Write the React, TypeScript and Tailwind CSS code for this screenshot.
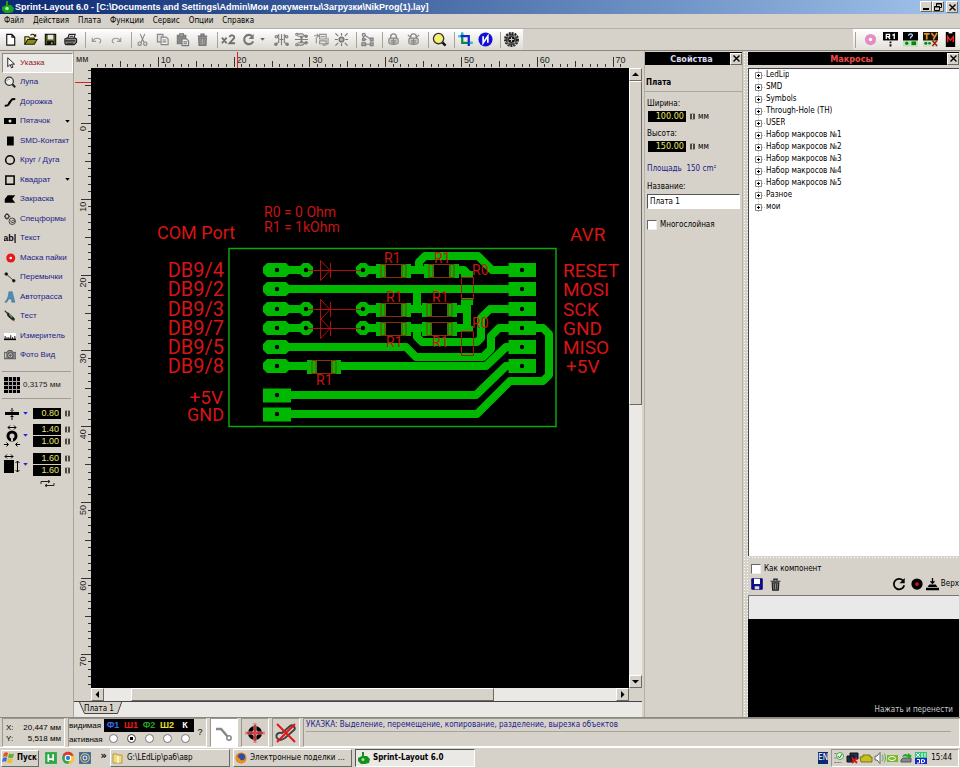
import { useState, type ReactNode } from 'react'

const RAISED = 'border border-t-white border-l-white border-r-[#6b6963] border-b-[#6b6963] bg-[#d6d2ca]'
const SUNKEN = 'border border-t-[#9a968e] border-l-[#9a968e] border-r-white border-b-white'
const TRACK = 'bg-[#ebe9e5]'

const MENU = ['Файл', 'Действия', 'Плата', 'Функции', 'Сервис', 'Опции', 'Справка']

const MACROS = [
  'LedLip',
  'SMD',
  'Symbols',
  'Through-Hole (TH)',
  'USER',
  'Набор макросов №1',
  'Набор макросов №2',
  'Набор макросов №3',
  'Набор макросов №4',
  'Набор макросов №5',
  'Разное',
  'мои',
]

const LAYERS = [
  { id: 'Ф1', color: 'text-[#3a6cf0]' },
  { id: 'Ш1', color: 'text-[#f01818]' },
  { id: 'Ф2', color: 'text-[#28a028]' },
  { id: 'Ш2', color: 'text-[#e8e030]' },
  { id: 'К', color: 'text-white' },
]

function Icon({ children, size = 16 }: { children: ReactNode; size?: number }) {
  return (
    <svg width={size} height={size} viewBox="0 0 16 16" fill="none" stroke="currentColor" strokeWidth="1.2" className="shrink-0" aria-hidden="true">
      {children}
    </svg>
  )
}

interface Item { label: string; icon: ReactNode; arrow?: boolean }

const lock = (
  <>
    <path d="M5 7V5a3 3 0 0 1 6 0v2" strokeWidth="1.5" />
    <path d="M3 8c0-1 1-1.500 2-1.500h6c1 0 2 .5 2 1.500v3c0 3-10 3-10 0z" fill="#ccc" />
    <path d="M5 9.500h6M5 11.500h6M8 7v6" />
  </>
)

const FILE_TOOLS: (Item | null)[] = [
  { label: 'Новый', icon: <path d="M4 2.500h5.500l3 3v8.500H4zM9.500 2.500v3h3" fill="#fff" stroke="#111" /> },
  {
    label: 'Открыть',
    icon: <g stroke="#222200"><path d="M2 13V5h4l1 1.500h5V8" fill="#e8e070" /><path d="M2 13l3-5h10l-3 5z" fill="#8a8a20" /><path d="M8 3.500c2-2 4-1 5 1M13.500 2.500v2h-2" /></g>,
  },
  {
    label: 'Сохранить',
    icon: <g stroke="#111"><path d="M2.500 2.500h11v11h-11z" fill="#55551a" /><path d="M5 3h6v5H5z" fill="#e8e8e0" stroke="none" /><path d="M5 10.500h6V13H5z" fill="#111" /><path d="M9 11h1v2H9z" fill="#fff" stroke="none" /></g>,
  },
  {
    label: 'Печать',
    icon: <g stroke="#222"><path d="M5 7l1.500-4.500H13L11.500 7" fill="#fff" /><path d="M2 7.500l2-1h9l1.500 1V11L12 13.500H3L2 12z" fill="#888" /><path d="M2 9.500h11M7 4.500h4M4 12h7" /></g>,
  },
  null,
  { label: 'Отменить', icon: <path d="M3.500 6v4h4M4 9.500C6 5.500 12 6 12.500 9c.3 2-1 2.500-2 2.500" stroke="#999" /> },
  { label: 'Повторить', icon: <path d="M12.500 6v4h-4M12 9.500C10 5.500 4 6 3.500 9c-.3 2 1 2.500 2 2.500" stroke="#999" /> },
  null,
  { label: 'Вырезать', icon: <g stroke="#888"><path d="M5.500 2L9.500 11M10.500 2L6.500 11" /><circle cx="5" cy="12.500" r="1.800" /><circle cx="11" cy="12.500" r="1.800" /></g> },
  { label: 'Копировать', icon: <g stroke="#888"><path d="M2.500 2.500h6v8h-6z" fill="#ddd" /><path d="M6.500 5.500H12l2 2v6H6.500zM8 8.500h4M8 10.500h4" fill="#eee" /></g> },
  { label: 'Вставить', icon: <g stroke="#777"><path d="M2.500 3.500h9v9h-9z" fill="#888" /><path d="M5 2h4v2.500H5z" fill="#bbb" /><path d="M7.500 7.500h5l2 2v5h-7zM9 10.500h4M9 12.500h4" fill="#eee" /></g> },
  { label: 'Удалить', icon: <g stroke="#777"><path d="M3 4.500h10M6.500 4V2.500h3V4M4 6.500h8l-.500 7.500h-7z" fill="#aaa" strokeWidth="1.600" /><path d="M6.500 7v6M9.500 7v6" /></g> },
  null,
  { label: 'Дублировать', icon: <path d="M1 6l5 6M6 6l-5 6M9 5.500C10 2.500 15 3 14 6.500L9 12h6" stroke="#707070" strokeWidth="2" /> },
  { label: 'Повернуть', arrow: true, icon: <><path d="M12 4.500A5 5 0 1 0 13 10" stroke="#777" strokeWidth="2.300" /><path d="M13.500 2v5.500H8z" fill="#777" stroke="none" /></> },
  {
    label: 'Отразить по горизонтали',
    icon: <g stroke="#808080"><path d="M8 2v12M3 5l2-2v8l-3 2M13 5l-2-2v8l3 2M6 8h4" /><circle cx="2.500" cy="5" r="1.300" /><circle cx="13.500" cy="5" r="1.300" /><circle cx="2" cy="13" r="1.300" fill="#808080" /><circle cx="14" cy="13" r="1.300" fill="#808080" /></g>,
  },
  {
    label: 'Отразить по вертикали',
    icon: <g stroke="#808080"><path d="M1 8h14M3 2h6l3 2.500H4M3 14h6l3-2.500H4M8 5v6M6.500 6.500L8 5l1.500 1.500M6.500 9.500L8 11l1.500-1.500" /><circle cx="3" cy="2.500" r="1.200" /><circle cx="3" cy="13.500" r="1.200" /><circle cx="13" cy="4.500" r="1.200" fill="#808080" /><circle cx="13" cy="11.500" r="1.200" fill="#808080" /></g>,
  },
  {
    label: 'Выровнять',
    icon: <g stroke="#909090"><path d="M0 4h5M3 2l2 2-2 2M2.500 6v6M6 2.500h7v5H6zM6 9.500h7v3H6zM9 14h4M15 6v7M13.500 12l1.500 1.500" /><path d="M7 5h5" /></g>,
  },
  { label: 'К сетке', icon: <g stroke="#777"><circle cx="8" cy="8" r="2.500" fill="#bbb" strokeWidth="1.600" /><path d="M1.500 1.500l3 3M14.500 1.500l-3 3M1.500 14.500l3-3M14.500 14.500l-3-3M8 1v3M8 12v3M1 8h3M12 8h3" /></g> },
  null,
  { label: 'Соединения', icon: <g stroke="#808080"><path d="M4 3l8 5M3.500 3v4M4 8h3M4 13h8" /><circle cx="4" cy="3" r="1.600" fill="#ddd" /><circle cx="4" cy="8" r="1.600" fill="#999" /><path d="M2 11.500h4v3H2zM11 6.500h3v3h-3zM11 11.500h3v3h-3z" fill="#aaa" /></g> },
  null,
  { label: 'Закрепить', icon: <g stroke="#888">{lock}</g> },
  { label: 'Открепить', icon: <g stroke="#888">{lock}<path d="M2 3l3 3M14 3l-3 3" /></g> },
  null,
  { label: 'Масштаб', icon: <><path d="M10.500 10.500l4 4" stroke="#111" strokeWidth="2.600" /><circle cx="7" cy="7" r="5.500" fill="#f6f070" stroke="#333" strokeWidth="1.400" /></> },
  null,
  { label: 'Фотошаблон', icon: <><path d="M4.500 1v10.500H15" stroke="#0a8a4a" strokeWidth="2.400" /><path d="M2 4.500h9.500V15" stroke="#1828d0" strokeWidth="2.400" /><path d="M0 3.500h3v2H0zM3.500 0h2v3h-2zM12.500 10.500H16v2h-3.500z" fill="#30c8e8" stroke="none" /></> },
  { label: 'Информация', icon: <><circle cx="8" cy="8" r="7.500" fill="#1010d8" stroke="none" /><path d="M5.500 4.500v7l5-7v7" stroke="#fff" strokeWidth="1.800" /></> },
  null,
  { label: 'Сетка', icon: <><circle cx="8" cy="8" r="6.500" fill="#555" stroke="#222" strokeWidth="3" strokeDasharray="2 1" /><path d="M2 5h12M2 11h12M5 2v12M11 2v12" stroke="#bbb" strokeWidth=".6" /><circle cx="8" cy="8" r="3.500" fill="#111" stroke="none" /><path d="M8 5.500v5M5.500 8h5" stroke="#ccc" /></> },
]

const PANEL_TOOLS: Item[] = [
  { label: 'Пайка', icon: <><circle cx="8" cy="8" r="6" fill="#e48cc4" stroke="none" /><circle cx="8" cy="8" r="1.800" fill="#fff" stroke="none" /></> },
  { label: 'Компоненты', icon: <><path d="M0 0h16v9H0z" fill="#000" stroke="none" /><path d="M3.500 7.500v-5H7v2.500H3.500M5.500 5l2 2.500M10 3.500l2-1v5" stroke="#fff" strokeWidth="1.400" /><path d="M8 10v2M8 13v2.500" stroke="#111" strokeWidth="2" /></> },
  { label: 'Помощь', icon: <><path d="M0 0h16v15H0z" fill="#000" stroke="none" /><path d="M6 4c0-3 4.500-2.500 4 0L8 6v1" stroke="#b8d8ff" strokeWidth="1.400" /><path d="M0 9h16v6H0z" fill="#b8e8b8" stroke="none" /><circle cx="4" cy="12" r="1.800" fill="#108010" stroke="none" /><path d="M9 10h5v4H9z" fill="#108010" stroke="none" /></> },
  { label: 'Технические условия', icon: <><path d="M0 0h16v15H0z" fill="#111" stroke="none" /><path d="M1 2h6M4 2v6M9 1l2.500 3.500M15 1l-4 7" stroke="#e89018" strokeWidth="1.800" /><path d="M0 9h16v6H0z" fill="#c8e8c0" stroke="none" /><circle cx="3" cy="12" r="1.600" fill="#207020" stroke="none" /><circle cx="7" cy="12" r="1.400" fill="#207020" stroke="none" /><path d="M10 9l5 6M15 9l-5 6" stroke="#b01818" strokeWidth="1.600" /></> },
  { label: 'Макросы', icon: <><path d="M3 0h10v16H3z" fill="#000" stroke="none" /><path d="M5 11V5l3 4 3-4v6" stroke="#f02020" strokeWidth="1.500" /><path d="M6 0h4v1.500H6z" fill="#fff" stroke="none" /></> },
]

const TOOLS: Item[] = [
  { label: 'Указка', icon: <path d="M5 1v12l3-3 2 4.500 2-1L10 9.500h4z" fill="#fff" stroke="#111" /> },
  { label: 'Лупа', icon: <><circle cx="7" cy="7" r="5.500" fill="#eee" stroke="#333" strokeWidth="1.600" /><path d="M11 11l4 4" stroke="#222" strokeWidth="2.600" /><path d="M4 7c0-2 2-3.500 4-2.500" stroke="#888" /></> },
  { label: 'Дорожка', icon: <path d="M1 13c6 0 4-1 7-5s2-4 7-4" stroke="#000" strokeWidth="2.800" /> },
  { label: 'Пятачок', arrow: true, icon: <><path d="M0 4h16v8H0z" fill="#000" stroke="none" /><circle cx="8" cy="8" r="2" fill="#e8e8e8" stroke="none" /></> },
  { label: 'SMD-Контакт', icon: <path d="M4 2h9v12H4z" fill="#000" stroke="none" /> },
  { label: 'Круг / Дуга', icon: <circle cx="8" cy="8" r="5.800" stroke="#000" strokeWidth="2" /> },
  { label: 'Квадрат', arrow: true, icon: <path d="M2.500 2.500h11v11h-11z" stroke="#000" strokeWidth="2" /> },
  { label: 'Закраска', icon: <path d="M1 13V8l4-5h10l-4 5 4 5z" fill="#000" stroke="none" /> },
  { label: 'Спецформы', icon: <g stroke="#333"><circle cx="4" cy="4.500" r="2.600" strokeWidth="1.500" /><path d="M4 0v2M4 7v2M0 4.500h1.500M6.500 4.500h2" /><circle cx="11" cy="11" r="4.300" /><path d="M11 11a1.500 1.500 0 1 1 1.800 1.500c-3 1-4-1-3.600-2.500" /></g> },
  { label: 'Текст', icon: <text x="-1" y="12" fontSize="12" fontWeight="700" fontFamily="Liberation Sans, sans-serif" fill="#000" stroke="none">ab|</text> },
  { label: 'Маска пайки', icon: <><circle cx="9" cy="8" r="6" fill="#e81818" stroke="none" /><circle cx="9" cy="8" r="1.800" fill="#fff" stroke="none" /></> },
  { label: 'Перемычки', icon: <g stroke="#333"><path d="M3 4l10 9" /><circle cx="3" cy="4" r="1.800" fill="#000" /><circle cx="13" cy="13" r="1.800" fill="#000" /></g> },
  { label: 'Автотрасса', icon: <path d="M1 15C5 11 6 6 6.500 1H11l3.500 14h-4l-.8-4.500H6c-.5 2-1.500 3.500-2.500 4.500zM7 8h2l-.7-3.500z" fill="#4e90b8" stroke="#2c6488" strokeWidth=".6" fillRule="evenodd" /> },
  { label: 'Тест', icon: <><path d="M1 1l6 6" stroke="#333" strokeWidth="1.500" /><path d="M5 3.500l8 7c2 2 0 4-2 2.500L5 8z" fill="#222" stroke="#222" /><path d="M7 6l4 4" stroke="#58a858" strokeWidth="1.500" /><path d="M12 13l2 2" stroke="#a02020" /></> },
  { label: 'Измеритель', icon: <><path d="M0 4h16v9H0z" fill="#fff" stroke="none" /><path d="M0 12.500h16" stroke="#000" strokeWidth="2" /><path d="M1.500 8v4M4 9.500V12M6.500 9.500V12M9 7v5M11.500 9.500V12M14.500 8v4" stroke="#000" /></> },
  { label: 'Фото Вид', icon: <g stroke="#555"><path d="M0 4.500h4L5.500 2h5L12 4.500h4V13H0z" fill="#888" /><circle cx="8.500" cy="8.500" r="3.500" fill="#ddd" strokeWidth="1.500" /><circle cx="8.500" cy="8.500" r="1.300" fill="#555" /><path d="M2 5.500v6" stroke="#ccc" /></g> },
]

const Triangle = ({ className }: { className: string }) => (
  <svg width="5" height="3" viewBox="0 0 6 4" className={className} aria-hidden="true"><path d="M0 0h6L3 3.500z" fill="currentColor" /></svg>
)

const Spin = () => (
  <svg width="5" height="7" viewBox="0 0 5 7" className="shrink-0" aria-hidden="true">
    <path d="M0 1h2v5H0zM3 1h2v5H3z" fill="#4c4a46" />
    <path d="M0 0h5v1H0zM0 6h5v1H0z" fill="#a8a49c" />
  </svg>
)

function NumberField({ label, value, wide }: { label: string; value: string; wide?: boolean }) {
  return (
    <span className="flex items-center gap-1">
      <input
        aria-label={label}
        defaultValue={value}
        className={`${wide ? 'w-[38px]' : 'w-7'} h-[11px] bg-black pr-0.5 text-right text-[9px] leading-[11px] text-[#e6e66e]`}
      />
      <Spin />
    </span>
  )
}

function CloseButton({ label }: { label: string }) {
  return (
    <button aria-label={label} className={`${RAISED} flex size-3 shrink-0 items-center justify-center`}>
      <svg width="7" height="7" viewBox="0 0 7 7"><path d="M.5.5l6 6M6.500.5l-6 6" stroke="#000" strokeWidth="1.400" /></svg>
    </button>
  )
}

function TitleBar() {
  return (
    <header className="flex h-[14px] shrink-0 items-center bg-linear-to-r from-[#0c2872] to-[#a2c4ec] pr-0.5 pl-0.5">
      <svg width="12" height="12" viewBox="0 0 12 12" className="shrink-0" aria-hidden="true">
        <path d="M4 0h2v4h3l3 3-1 4-4 1H3L0 9V6l4-2z" fill="#18a018" />
        <circle cx="5" cy="7.500" r="1.800" fill="#b8f0b0" />
      </svg>
      <h1 className="flex-1 truncate pl-px font-[Liberation_Sans,sans-serif] text-[9px] leading-3 font-bold text-white">
        Sprint-Layout 6.0 - [C:\Documents and Settings\Admin\Мои документы\Загрузки\NikProg(1).lay]
      </h1>
      <div className="flex">
        <button aria-label="Свернуть" className={`${RAISED} flex h-[11px] w-3 items-end justify-center pb-px`}>
          <span className="h-0.5 w-1.5 bg-black" />
        </button>
        <button aria-label="Восстановить" className={`${RAISED} mr-0.5 flex h-[11px] w-3 items-center justify-center`}>
          <svg width="8" height="8" viewBox="0 0 8 8"><path d="M2.500 3V.5h5v4H6M.5 3.500h5v4h-5zM.5 4h5M2.500 1h5" fill="none" stroke="#000" /></svg>
        </button>
        <CloseButton label="Закрыть" />
      </div>
    </header>
  )
}

function Toolbar() {
  return (
    <div className="flex h-[22px] shrink-0 items-stretch justify-between border-b border-[#8c8880]">
      <div className="flex items-center bg-linear-to-b from-white to-[#dcd9d2] pr-0.5">
        {FILE_TOOLS.map((tool, i) =>
          tool ? (
            <button key={i} aria-label={tool.label} title={tool.label} className={`${tool.arrow ? 'w-[33px]' : 'w-5'} flex items-center gap-1 pl-[3px]`}>
              <Icon size={15}>{tool.icon}</Icon>
              {tool.arrow && <Triangle className="text-[#666]" />}
            </button>
          ) : (
            <span key={i} className="flex w-1.5 justify-end"><span className="h-4 w-px bg-[#a8a49c]" /></span>
          ),
        )}
      </div>
      <div className="flex items-center bg-linear-to-b from-white to-[#e4e1da] pl-0.5">
        <span className="mr-1 h-4 w-px bg-[#a8a49c]" />
        {PANEL_TOOLS.map(tool => (
          <button key={tool.label} aria-label={tool.label} title={tool.label} className="flex w-5 justify-center">
            <Icon size={15}>{tool.icon}</Icon>
          </button>
        ))}
      </div>
    </div>
  )
}

function ToolPanel() {
  const [active, setActive] = useState('Указка')
  return (
    <aside className="flex w-[74px] shrink-0 flex-col border-r border-[#a8a49c] pt-0.5 font-[Liberation_Sans,sans-serif]">
      <div className="grid h-[312px] auto-rows-fr pl-0.5">
        {TOOLS.map(tool => (
          <button
            key={tool.label}
            onClick={() => setActive(tool.label)}
            className={`flex min-w-0 items-center gap-1 border pl-px text-left whitespace-nowrap ${
              active === tool.label
                ? 'border-t-[#8c8880] border-r-white border-b-white border-l-[#8c8880] bg-[#ebe9e5] text-[#8c1c1c]'
                : 'border-transparent text-[#1c1c88]'
            }`}
          >
            <Icon size={12}>{tool.icon}</Icon>
            <span className="flex-1">{tool.label}</span>
            {tool.arrow && <Triangle className="mr-0.5 text-black" />}
          </button>
        ))}
      </div>
      <div className="mx-0.5 mt-1.5 flex h-7 items-center gap-[3px] border-y border-[#a09c94] pl-0.5">
        <svg width="16" height="16" viewBox="0 0 16 16" aria-hidden="true">
          <path d="M0 0h16v16H0z" fill="#000" />
          <path d="M0 4.500h16M0 8.500h16M0 12.500h16M4.500 0v16M8.500 0v16M12.500 0v16" stroke="#a8a8a8" />
        </svg>
        <span className="whitespace-nowrap text-[#222]">0,3175 мм</span>
      </div>
      <div className="mt-2 flex flex-col gap-1 pl-1">
        <div className="flex h-[13px] items-center gap-[3px]">
          <svg width="16" height="13" viewBox="0 0 16 13" aria-hidden="true"><path d="M1 5h14v3H1zM6 3l2 2 2-2zM6 10l2-2 2 2zM7.500 1h1v3h-1zM7.500 9h1v4h-1z" fill="#000" /></svg>
          <Triangle className="mr-0.5 text-[#2020e0]" />
          <NumberField label="Ширина дорожки" value="0.80" />
        </div>
        <div className="flex items-center gap-[3px]">
          <svg width="16" height="22" viewBox="0 0 16 22" aria-hidden="true">
            <path d="M4 2.500h8M6 .5l-2 2 2 2M10 .5l2 2-2 2M0 19.500h4M16 19.500h-4M2.500 17.500l2 2-2 2M13.500 17.500l-2 2 2 2" fill="none" stroke="#000" />
            <circle cx="8" cy="11" r="4" fill="none" stroke="#000" strokeWidth="3" />
            <path d="M7 11h2v5H7z" fill="#ccc" />
          </svg>
          <Triangle className="mr-0.5 text-[#2020e0]" />
          <div className="flex flex-col gap-px">
            <NumberField label="Диаметр пятачка" value="1.40" />
            <NumberField label="Диаметр отверстия" value="1.00" />
          </div>
        </div>
        <div className="mt-0.5 flex items-center gap-[3px]">
          <svg width="16" height="22" viewBox="0 0 16 22" aria-hidden="true">
            <path d="M0 6h10v13H0z" fill="#000" />
            <path d="M1 2.500h8M3 .5l-2 2 2 2M7 .5l2 2-2 2M13.500 7v11M11.500 9l2-2 2 2M11.500 16l2 2 2-2" fill="none" stroke="#000" />
          </svg>
          <Triangle className="mr-0.5 text-[#2020e0]" />
          <div className="flex flex-col gap-px">
            <NumberField label="Ширина контакта" value="1.60" />
            <NumberField label="Высота контакта" value="1.60" />
          </div>
        </div>
        <button aria-label="Поменять местами" className="ml-9 w-4">
          <svg width="15" height="7" viewBox="0 0 15 7"><path d="M1 4V1.500h9M8 0l2 1.500L8 3M14 3v2.500H5M7 4L5 5.500 7 7" fill="none" stroke="#222" /></svg>
        </button>
      </div>
    </aside>
  )
}

// 10 mm on the board take 75.8 px on screen
const MM = 7.58

function HRuler() {
  const ticks = Array.from({ length: 85 }, (_, i) => i + 2)
  return (
    <div className="flex h-4 shrink-0 overflow-hidden text-[9px] leading-[14px] text-[#222]">
      <span className="w-[17px] shrink-0 pl-0.5 font-[Liberation_Sans,sans-serif]">мм</span>
      <svg width="551" height="16" viewBox="91 52 551 16" className="shrink-0 font-[Liberation_Sans,sans-serif]">
        {ticks.map(n => {
          const x = 83 + n * MM
          const h = n % 10 === 0 ? 10 : n % 5 === 0 ? 6 : 3
          if (x > 628) return null
          return (
            <g key={n}>
              <path d={`M${Math.round(x) - 0.5} 67v-${h}`} stroke="#333" />
              {n % 10 === 0 && <text x={x + 2} y="63" fontSize="9" fill="#222">{n}</text>}
            </g>
          )
        })}
        <path d="M237.500 52v16" stroke="#e02020" />
      </svg>
    </div>
  )
}

function VRuler() {
  const ticks = Array.from({ length: 84 }, (_, i) => i - 7)
  return (
    <div className="w-[17px] shrink-0 overflow-hidden">
      <svg width="17" height="632" viewBox="74 68 17 632" className="font-[Liberation_Sans,sans-serif]">
        {ticks.map(n => {
          const y = 124 + n * MM
          const w = n % 10 === 0 ? 10 : n % 5 === 0 ? 6 : 3
          if (y > 686) return null
          return (
            <g key={n}>
              <path d={`M91 ${Math.round(y) - 0.5}h-${w}`} stroke="#333" />
              {n % 10 === 0 && <text transform={`translate(86 ${y + 2}) rotate(-90)`} textAnchor="end" fontSize="9" fill="#222">{n}</text>}
            </g>
          )
        })}
        <path d="M75 82.500h16" stroke="#e02020" />
      </svg>
    </div>
  )
}

const ROWS = [270, 289, 309, 328, 347, 366]
const LEFT_NETS = ['DB9/4', 'DB9/2', 'DB9/3', 'DB9/7', 'DB9/5', 'DB9/8']
const RIGHT_NETS = ['RESET', 'MOSI', 'SCK', 'GND', 'MISO', '+5V']
const DIODES = [270, 309, 328]

const TRACES = [
  'M280 270H306M363 270H380M407 270H428M455 270H464L467 273V277M419 270V262L425 256H478L492 270H515',
  'M280 289H515M417 289V309',
  'M280 309H306M363 309H380M407 309H426M452 309H467',
  'M280 328H306M363 328H380M407 328H426M452 328H467M467 303V331',
  'M417 328V337L422 342H477L481 338V318L490 309H515',
  'M280 347H406L416 357H483L491 349V336L499 328H543L549 334V375L543 381H510L477 414H280',
  'M280 366H312M336 366H486L506 347H515',
  'M280 395H476L506 366H515',
]

// x of the left pad, y of the centre, body length
const RESISTORS = [
  [376, 271, 35], [424, 271, 35],
  [376, 310, 35], [422, 310, 35],
  [376, 329, 35], [422, 329, 35],
  [307, 367, 34],
]

const PART_LABELS: [string, number, number][] = [
  ['R1', 384, 263], ['R1', 434, 263], ['R0', 472, 275],
  ['R1', 386, 302], ['R1', 432, 302], ['R0', 472, 328],
  ['R1', 386, 347], ['R1', 432, 347], ['R1', 316, 385],
]

function Octagon({ x, y, w }: { x: number; y: number; w: number }) {
  return <path d={`M${x + 4} ${y - 7}h${w - 8}l4 4v6l-4 4h-${w - 8}l-4 -4v-6z`} />
}

function Board() {
  return (
    <svg width="538" height="619" viewBox="91 68 538 619" role="img" aria-label="Плата 1" className="block font-[Roboto,sans-serif]">
      <path d="M229 248.500H556V426.500H229z" fill="none" stroke="#0aa80a" strokeWidth="1.500" />
      <g fill="none" stroke="#00b800" strokeWidth="8" strokeLinejoin="round">
        {TRACES.map(d => <path key={d} d={d} />)}
      </g>
      <g fill="#00b800">
        {ROWS.map(y => <Octagon key={y} x={263} y={y} w={27} />)}
        {ROWS.map(y => <path key={y} d={`M508.500 ${y - 7}h27.500v14h-27.500z`} />)}
        <path d="M263 388.500h28v14h-28zM263 407.500h28v14h-28z" />
        {DIODES.map(y => (
          <g key={y}>
            <Octagon x={299} y={y} w={14} />
            <Octagon x={356} y={y} w={14} />
          </g>
        ))}
        <path d="M461 271h12v6h-12zM461 298h12v7h-12zM461 326h12v6h-12z" />
      </g>
      {RESISTORS.map(([x, y, len]) => (
        <g key={`${x}-${y}`}>
          <path d={`M${x + 9} ${y - 7}h${len - 18}v14h-${len - 18}z`} fill="#000" />
          <path d={`M${x} ${y - 7}h10v14h-10zM${x + len - 10} ${y - 7}h10v14h-10z`} fill="#00b800" />
          <path
            d={`M${x + 5} ${y - 6.5}h${len - 10}v13h-${len - 10}zM${x + 9} ${y - 6}v12M${x + len - 9} ${y - 6}v12`}
            fill="none"
            stroke="#8a3008"
          />
        </g>
      ))}
      <g fill="#000">
        {ROWS.concat(395, 414).map(y => <circle key={y} cx="277" cy={y} r="2.200" />)}
        {ROWS.map(y => <circle key={y} cx="522" cy={y} r="2.200" />)}
        {DIODES.map(y => (
          <g key={y}>
            <circle cx="306" cy={y} r="2.200" />
            <circle cx="363" cy={y} r="2.200" />
          </g>
        ))}
      </g>
      <g fill="none" stroke="#b01010">
        {DIODES.map(y => <path key={y} d={`M308 ${y + 0.5}h53M320.500 ${y - 9.5}v20l9.500 -10zM330.500 ${y - 7}v15`} />)}
        <path d="M461.500 277.500h12v22h-12zM461.500 331.500h12v24h-12z" />
      </g>
      <g fill="#d81414" fontSize="19">
        <text x="157" y="239" fontSize="18">COM Port</text>
        <text x="570" y="241">AVR</text>
        {LEFT_NETS.map((net, i) => <text key={net} x="224" y={ROWS[i] + 7} fontSize="20" textAnchor="end">{net}</text>)}
        {RIGHT_NETS.map((net, i) => <text key={net} x={i === 5 ? 566 : 563} y={ROWS[i] + 7}>{net}</text>)}
        <text x="223" y="404" textAnchor="end">+5V</text>
        <text x="224" y="421" fontSize="18" textAnchor="end">GND</text>
      </g>
      <g fill="#c81414" fontSize="14">
        <text x="264" y="217">R0 = 0 Ohm</text>
        <text x="264" y="232">R1 = 1kOhm</text>
        {PART_LABELS.map(([name, x, y]) => <text key={`${x}-${y}`} x={x} y={y}>{name}</text>)}
      </g>
    </svg>
  )
}

function ScrollButton({ label, d }: { label: string; d: string }) {
  return (
    <button aria-label={label} className={`${RAISED} flex size-[13px] shrink-0 items-center justify-center`}>
      <svg width="7" height="7" viewBox="0 0 7 7"><path d={d} fill="#000" /></svg>
    </button>
  )
}

function Workspace() {
  return (
    <main className="flex min-w-0 flex-1 flex-col pt-px">
      <HRuler />
      <div className="flex min-h-0 flex-1">
        <VRuler />
        <div className="flex min-w-0 flex-1 flex-col">
          <div className="flex min-h-0 flex-1">
            <div className="min-w-0 flex-1 overflow-hidden bg-black"><Board /></div>
            <div className={`${TRACK} flex w-[13px] shrink-0 flex-col`}>
              <ScrollButton label="Вверх" d="M0 5h7L3.500 1.500z" />
              <div className={`${RAISED} flex-[323]`} />
              <div className="flex-[270]" />
              <ScrollButton label="Вниз" d="M0 2h7L3.500 5.500z" />
            </div>
          </div>
          <div className="flex shrink-0">
            <div className={`${TRACK} flex min-w-0 flex-1`}>
              <ScrollButton label="Влево" d="M5 0v7L1.500 3.500z" />
              <div className="flex-[27]" />
              <div className={`${RAISED} flex-[363]`} />
              <div className="flex-[123]" />
              <ScrollButton label="Вправо" d="M2 0v7l3.500-3.500z" />
            </div>
            <div className="w-[13px] shrink-0" />
          </div>
        </div>
      </div>
      <div className={`${TRACK} flex h-4 shrink-0 border-t border-[#444]`}>
        <button className="relative h-[13px] w-[50px] leading-[13px]">
          <svg width="50" height="13" viewBox="0 0 50 13" className="absolute inset-0" aria-hidden="true">
            <path d="M5 -1l5.500 12.500h33L48 -1" fill="#d6d2ca" stroke="#444" />
          </svg>
          <span className="relative">Плата 1</span>
        </button>
      </div>
    </main>
  )
}

function PanelHeader({ title, color }: { title: string; color: string }) {
  return (
    <div className="flex h-[13px] shrink-0 items-center bg-black">
      <h2 className={`${color} flex-1 pl-2 text-center text-[9px] leading-3 font-bold`}>{title}</h2>
      <CloseButton label={`Закрыть ${title}`} />
    </div>
  )
}

function Properties() {
  return (
    <aside className="ml-0.5 flex w-[99px] shrink-0 flex-col border-x border-[#b4b0a8] pt-px">
      <PanelHeader title="Свойства" color="text-[#d8d8f0]" />
      <h3 className="mt-3 border-b border-[#aaa69e] pb-0.5 pl-px leading-3 font-bold">Плата</h3>
      <div className="mt-1.5 flex flex-col px-0.5 leading-3">
        <span>Ширина:</span>
        <div className="flex h-[13px] items-center gap-[3px] pl-px"><NumberField wide label="Ширина" value="100.00" /><span>мм</span></div>
        <span className="mt-[5px]">Высота:</span>
        <div className="flex h-[13px] items-center gap-[3px] pl-px"><NumberField wide label="Высота" value="150.00" /><span>мм</span></div>
        <p className="mt-2.5 whitespace-pre text-[#1c1c88]">Площадь  150 cm²</p>
        <label htmlFor="board-name" className="mt-1.5">Название:</label>
        <input id="board-name" defaultValue="Плата 1" className="mt-px h-[15px] w-full border border-t-[#555] border-r-white border-b-white border-l-[#555] bg-white pl-0.5" />
        <label className="mt-2.5 flex items-center gap-[3px] whitespace-nowrap">
          <input type="checkbox" className="size-2.5 appearance-none border border-t-[#666] border-r-[#eee] border-b-[#eee] border-l-[#666] bg-white checked:bg-[#444]" />
          Многослойная
        </label>
      </div>
    </aside>
  )
}

function Macros() {
  return (
    <aside className="flex w-[212px] shrink-0 flex-col pt-px pr-px">
      <PanelHeader title="Макросы" color="text-[#f04848]" />
      <ul className="mt-[3px] flex-1 overflow-hidden border-t border-l border-[#444] bg-white">
        {MACROS.map(name => (
          <li key={name} className="flex h-3 items-center pl-1.5">
            <svg width="11" height="12" viewBox="0 0 11 12" aria-hidden="true">
              <path d="M3.500 0v12M7 6.500h4" stroke="#bbb" strokeDasharray="1 1" />
              <path d="M.5 3.500h6v6h-6z" fill="#fff" stroke="#888" />
              <path d="M2 6.500h3M3.500 5v3" stroke="#000" />
            </svg>
            <button className="truncate leading-3">{name}</button>
          </li>
        ))}
      </ul>
      <div className="h-1 shrink-0 bg-[radial-gradient(#fff_1px,transparent_1px)] bg-[size:3px_3px]" />
      <label className="flex h-[17px] items-center gap-[3px] pl-[3px]">
        <input type="checkbox" className="size-2.5 appearance-none border border-t-[#666] border-r-[#eee] border-b-[#eee] border-l-[#666] bg-white checked:bg-[#444]" />
        Как компонент
      </label>
      <div className="flex h-[18px] items-center gap-1.5 pb-1 pl-[3px]">
        <button aria-label="Сохранить макрос">
          <Icon size={12}><path d="M1 1h14v14H1z" fill="#101090" stroke="#000060" /><path d="M4 1h8v7H4z" fill="#fff" stroke="none" /><path d="M5 11h6v4H5z" fill="#ddd" stroke="none" /></Icon>
        </button>
        <button aria-label="Удалить макрос">
          <Icon size={13}><path d="M2 4h12M6 3V1.500h4V3M4 6h8l-.5 9h-7z" fill="#888" stroke="#222" strokeWidth="1.500" /><path d="M6.500 7v7M9.500 7v7" stroke="#222" /></Icon>
        </button>
        <div className="ml-auto flex items-center gap-[3px]">
          <button aria-label="Повернуть макрос">
            <Icon size={14}><path d="M12.500 4A6 6 0 1 0 14 9.500" stroke="#000" strokeWidth="2" /><path d="M14.500 1v6h-6z" fill="#000" stroke="none" /></Icon>
          </button>
          <button aria-label="Слой" className="ml-0.5">
            <Icon size={12}><circle cx="8" cy="8" r="7.500" fill="#000" stroke="none" /><circle cx="8" cy="8" r="2.500" fill="#d01818" stroke="none" /></Icon>
          </button>
          <button className="flex items-center gap-0.5">
            <Icon size={13}><path d="M8 0v6M5.500 4L8 6.500 10.500 4" stroke="#000" strokeWidth="1.600" /><path d="M4 8h8l2 3H2zM0 12h16v3H0z" fill="#000" stroke="none" /></Icon>
            Верх
          </button>
        </div>
      </div>
      <div className="h-6 shrink-0 border-t border-l border-[#777] bg-[#e9e9e9]" />
      <div className="flex h-[98px] shrink-0 items-end justify-end bg-black pr-1.5 pb-px text-[#c8c8c8]">Нажать и перенести</div>
    </aside>
  )
}

function StatusBar() {
  const [layer, setLayer] = useState('Ш1')
  return (
    <footer className="flex h-[30px] shrink-0 items-stretch gap-[3px] border-t border-[#8c8880] pl-0.5 font-[Liberation_Sans,sans-serif]">
      <dl className={`${SUNKEN} grid w-[63px] grid-cols-[auto_1fr] content-center px-[3px] leading-[11px] whitespace-nowrap`}>
        <dt>X:</dt><dd className="text-right">20,447 мм</dd>
        <dt>Y:</dt><dd className="text-right">5,518 мм</dd>
      </dl>
      <div className={`${SUNKEN} flex`}>
        <div className="flex w-[35px] flex-col justify-between overflow-hidden leading-[13px] whitespace-nowrap">
          <span>видимая</span>
          <span>активная</span>
        </div>
        {LAYERS.map(({ id, color }) => (
          <label key={id} className={`${color} flex w-[18px] flex-col items-center`}>
            <span className="h-[13px] w-full bg-black text-center text-[9px] leading-[13px] font-bold">{id}</span>
            <input
              type="radio"
              name="layer"
              checked={layer === id}
              onChange={() => setLayer(id)}
              className="mt-0.5 size-[9px] appearance-none rounded-full border border-[#777] bg-white checked:border-[#444] checked:bg-[radial-gradient(#000_1.500px,#fff_2px)]"
            />
          </label>
        ))}
        <button className="w-3 text-[9px]">?</button>
      </div>
      <button aria-label="Дорожки" className={`${SUNKEN} flex w-7 items-center justify-center bg-white`}>
        <svg width="20" height="20" viewBox="0 0 20 20"><path d="M2 6h5l7 8" fill="none" stroke="#888" strokeWidth="2.500" /><circle cx="15" cy="15" r="2.200" fill="#fff" stroke="#888" strokeWidth="1.500" /></svg>
      </button>
      <button aria-label="Захват" className={`${SUNKEN} flex w-7 items-center justify-center`}>
        <svg width="22" height="22" viewBox="0 0 22 22"><circle cx="11" cy="11" r="5" fill="none" stroke="#000" strokeWidth="4" /><path d="M11 1v20M1 11h20" stroke="#e88080" strokeWidth="3" /><path d="M11 3v16M3 11h16" stroke="#700" /><circle cx="11" cy="11" r="2" fill="#e04040" /></svg>
      </button>
      <button aria-label="Без связей" className={`${SUNKEN} flex w-7 items-center justify-center`}>
        <svg width="22" height="22" viewBox="0 0 22 22"><path d="M2 16c-2-4 2-6 5-5l8-7c3-2 6 2 4 4l-9 8c-3 2-6 3-8 0z" fill="none" stroke="#444" strokeWidth="2" /><path d="M2 2l18 18M20 2L2 20" stroke="#e01818" strokeWidth="2" /></svg>
      </button>
      <div className={`${SUNKEN} flex-1 pr-2 pl-0.5`}>
        <p className="border-b border-[#a8a49c] leading-[12px] font-['DejaVu_Sans_Condensed','Noto_Sans',sans-serif] text-[#1c1c88]">
          УКАЗКА: Выделение, перемещение, копирование, разделение, вырезка объектов
        </p>
      </div>
    </footer>
  )
}

function Taskbar() {
  return (
    <nav className="flex h-[21px] shrink-0 items-center gap-[3px] border-t border-white bg-[#d6d2ca] px-px">
      <button className={`${RAISED} flex h-[17px] w-[38px] shrink-0 items-center gap-0.5 font-bold`}>
        <svg width="13" height="12" viewBox="0 0 13 12" className="shrink-0" aria-hidden="true">
          <path d="M2 1c2-1 3-1 4 0L5 5C4 4 3 4 1 5z" fill="#e8501c" />
          <path d="M7 1.500c2 1 3 1 5 0L11 5.500c-2 1-3 1-5 0z" fill="#60b030" />
          <path d="M1 6c2-1 3-1 4 0l-1 4c-1-1-2-1-4 0z" fill="#3070e0" />
          <path d="M6 6.500c2 1 3 1 5 0l-1 4c-2 1-3 1-5 0z" fill="#f0c020" />
        </svg>
        Пуск
      </button>
      <button aria-label="µTorrent" className="ml-0.5 shrink-0">
        <svg width="14" height="14" viewBox="0 0 13 13"><path d="M1 1h11v11H1z" fill="#30a848" /><path d="M4 3v7M4 7.500h4.500M8.500 3v6" stroke="#fff" strokeWidth="1.600" fill="none" /></svg>
      </button>
      <button aria-label="Chrome" className="shrink-0">
        <svg width="14" height="14" viewBox="0 0 13 13"><circle cx="6.500" cy="6.500" r="5.500" fill="#38a048" /><path d="M1.500 4A5.500 5.500 0 0 1 11.800 4.500H6.500z" fill="#e03828" /><path d="M12 4.500a5.500 5.500 0 0 1-5.500 7.500L9 7.500l-1-3z" fill="#f4cc30" /><circle cx="6.500" cy="6.500" r="2.500" fill="#3878e0" stroke="#fff" /></svg>
      </button>
      <button aria-label="Почта" className="shrink-0">
        <svg width="14" height="14" viewBox="0 0 13 13"><path d="M1 1h11v11H1z" fill="#3c6a98" /><circle cx="6.500" cy="6.500" r="4" fill="none" stroke="#e8c860" /><circle cx="6.500" cy="6.500" r="1.800" fill="none" stroke="#e8e8f8" /></svg>
      </button>
      <button aria-label="Ещё" className="w-3 pb-1 text-right text-[11px] leading-3 font-bold">»</button>
      <button className={`${RAISED} flex h-[18px] w-[120px] min-w-0 items-center gap-1 pl-px`}>
        <svg width="11" height="12" viewBox="0 0 11 12" className="shrink-0" aria-hidden="true"><path d="M1 2h4l1 1h4v8H1z" fill="#f2da80" stroke="#b8983c" /><path d="M5 4h2v7H5z" fill="#fff4c0" /></svg>
        <span className="truncate">G:\LEdLip\раб\авр</span>
      </button>
      <button className={`${RAISED} flex h-[18px] w-[119px] min-w-0 items-center gap-[3px] pl-px`}>
        <svg width="12" height="12" viewBox="0 0 12 12" className="shrink-0" aria-hidden="true"><circle cx="6" cy="6" r="5.500" fill="#e87818" /><circle cx="6.500" cy="5" r="3.500" fill="#2850a0" /><path d="M1 4c1 2 3 1 4 3s3 2 5 0c0 3-3 5-5 4S0 8 1 4z" fill="#f09020" /></svg>
        <span className="truncate">Электронные поделки ...</span>
      </button>
      <button className="flex h-[18px] w-[120px] min-w-0 items-center gap-[3px] border border-t-[#555] border-r-white border-b-white border-l-[#555] bg-[#ebe9e5] pl-0.5 font-bold">
        <svg width="12" height="12" viewBox="0 0 12 12" className="shrink-0" aria-hidden="true"><path d="M4 0h2v4h3l3 3-1 4-4 1H3L0 9V6l4-2z" fill="#18901c" /><circle cx="5" cy="7.500" r="1.500" fill="#a0e898" /></svg>
        <span className="truncate">Sprint-Layout 6.0</span>
      </button>
      <span className="ml-auto bg-[#0c2872] leading-3 text-white">EN</span>
      <div className={`${SUNKEN} flex h-[18px] items-center pl-px`}>
        <svg width="96" height="14" viewBox="0 0 96 14" aria-hidden="true">
          <path d="M1.500 2.500h5M1.500 7h4M1.500 11.500h7" stroke="#777" strokeDasharray="2 1" />
          <circle cx="7" cy="5" r="3.500" fill="#e8f8e8" stroke="#50a850" /><path d="M5 5l1.500 2L9 3" fill="none" stroke="#208020" />
          <path d="M17 2h8v6h-8zM14 5h7v6h-7z" fill="#203050" stroke="#111" /><path d="M19 7l5 5M24 7l-5 5" stroke="#e01818" strokeWidth="2" />
          <path d="M27 6h3V4h7v2h2v5H28z" fill="#c8c020" stroke="#787410" />
          <path d="M42 5h2l3-3.500v11L44 9h-2z" fill="#fff" stroke="#666" /><path d="M49 4c1.500 2 1.500 4 0 6M51 2.500c2 3 2 6 0 9" fill="none" stroke="#50a850" />
          <path d="M54 4h11v7H54z" fill="#7ab828" /><ellipse cx="59" cy="7.500" rx="3.500" ry="2" fill="none" stroke="#fff" />
          <path d="M68 9l2-2h8v4H68z" fill="#888" stroke="#555" /><path d="M69 6c1-3 4-4 6-2V2l4 3-4 3V6c-2-1-4-1-6 0z" fill="#20a828" />
          <path d="M82 1h12v6H82z" fill="#30c878" /><path d="M82 7h12v6H82z" fill="#1828c8" /><path d="M83 2l4 4M87 2l-4 4M89 2v4M92 2v4M84 8.500h2.500v3.500H84M88.500 8.500v3.500l3-1v-2z" fill="none" stroke="#fff" />
        </svg>
        <time className="pr-1.5 pl-0.5">15:44</time>
      </div>
    </nav>
  )
}

export default function App() {
  return (
    <div className="flex h-screen flex-col overflow-hidden bg-[#d6d2ca] font-['DejaVu_Sans_Condensed','Noto_Sans',sans-serif] text-[8px] text-black">
      <TitleBar />
      <nav className="flex h-[15px] shrink-0 items-center gap-[9px] border-b border-[#b4b0a8] pl-1">
        {MENU.map(name => <button key={name} className="leading-3">{name}</button>)}
      </nav>
      <Toolbar />
      <div className="flex min-h-0 flex-1">
        <ToolPanel />
        <Workspace />
        <Properties />
        <div className="w-[5px] shrink-0 bg-[radial-gradient(#fff_1px,transparent_1px)] bg-[size:3px_3px]" />
        <Macros />
      </div>
      <StatusBar />
      <Taskbar />
    </div>
  )
}
